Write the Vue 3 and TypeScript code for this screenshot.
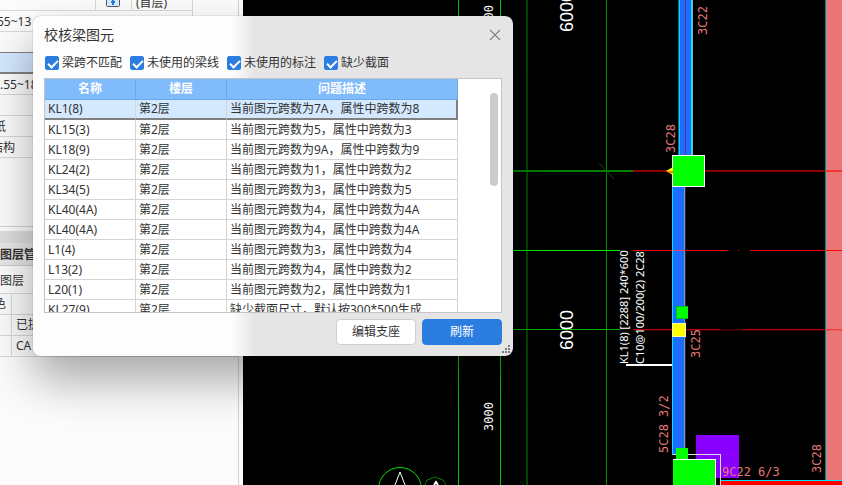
<script setup lang="ts">
import { ref } from 'vue'

interface Issue {
  name: string
  floor: string
  text: string
}
interface Filter {
  label: string
  on: boolean
}

const filters = ref<Filter[]>([
  { label: '梁跨不匹配', on: true },
  { label: '未使用的梁线', on: true },
  { label: '未使用的标注', on: true },
  { label: '缺少截面', on: true },
])

const span = (now: string, prop: string) => `当前图元跨数为${now}，属性中跨数为${prop}`
const issues: Issue[] = [
  { name: 'KL1(8)', floor: '第2层', text: span('7A', '8') },
  { name: 'KL15(3)', floor: '第2层', text: span('5', '3') },
  { name: 'KL18(9)', floor: '第2层', text: span('9A', '9') },
  { name: 'KL24(2)', floor: '第2层', text: span('1', '2') },
  { name: 'KL34(5)', floor: '第2层', text: span('3', '5') },
  { name: 'KL40(4A)', floor: '第2层', text: span('4', '4A') },
  { name: 'KL40(4A)', floor: '第2层', text: span('4', '4A') },
  { name: 'L1(4)', floor: '第2层', text: span('3', '4') },
  { name: 'L13(2)', floor: '第2层', text: span('4', '2') },
  { name: 'L20(1)', floor: '第2层', text: span('2', '1') },
  { name: 'KL27(9)', floor: '第2层', text: '缺少截面尺寸，默认按300*500生成' },
]
const selected = ref(0)
const open = ref(true)
</script>

<template>
  <div class="app">
    <aside class="side">
      <div class="drawings">
        <div class="row first">
          <span class="cell grow"></span>
          <span class="cell lock">
            <svg width="14" height="12" viewBox="0 0 14 12" aria-hidden="true">
              <rect x="0.5" y="-4" width="13" height="10.5" rx="1" fill="#dceafa" stroke="#4a5a78" />
              <path d="M7 5V-2M5 2h4" fill="none" stroke="#2b7de0" stroke-width="2" />
            </svg>
          </span>
          <span class="cell floor">(首层)</span>
        </div>
        <div class="row cut">55~13</div>
        <div class="row"></div>
        <div class="row picked"></div>
        <div class="row">.55~18</div>
        <div class="row"></div>
        <div class="row cut half">纸</div>
        <div class="row cut">结构</div>
      </div>
      <div class="splitter"></div>
      <div class="heading">图层管</div>
      <div class="tab">图层</div>
      <div class="layers">
        <div class="row"><span class="cell key">色</span><span class="cell"></span></div>
        <div class="row"><span class="cell key"></span><span class="cell">已提</span></div>
        <div class="row"><span class="cell key"></span><span class="cell">CA</span></div>
      </div>
    </aside>

    <main class="canvas">
      <svg class="cad" viewBox="243 0 599 485" preserveAspectRatio="xMinYMin slice" role="img" aria-label="梁平面图">
        <g shape-rendering="crispEdges">
          <rect x="458" y="0" width="1" height="485" fill="#00c800" />
          <rect x="500" y="0" width="1" height="485" fill="#00c800" />
          <rect x="526" y="0" width="2" height="485" fill="#004600" />
          <rect x="606" y="0" width="1" height="485" fill="#008c00" />
          <rect x="513" y="170" width="120" height="2" fill="#008000" />
          <rect x="513" y="250" width="107" height="1" fill="#00f000" />
          <rect x="513" y="329" width="107" height="1" fill="#00b400" />
          <rect x="633" y="170" width="209" height="2" fill="#8c0000" />
          <path d="M633 250.500H728M738 250.500h1M750 250.500H842" stroke="#f00" />
          <rect x="633" y="329" width="209" height="1" fill="#b80000" />
          <rect x="633" y="330" width="209" height="1" fill="#380000" />
          <rect x="720" y="329" width="23" height="1" fill="#400000" />

          <rect x="679" y="0" width="14" height="156" fill="#1b6cff" />
          <rect x="678" y="0" width="1" height="156" fill="#146a7c" />
          <rect x="679" y="0" width="1" height="156" fill="#00d8ff" />
          <rect x="691" y="0" width="1" height="156" fill="#00e8ff" />
          <rect x="685" y="0" width="1" height="156" fill="#65308c" />
          <rect x="692" y="0" width="1" height="156" fill="#6fb8bc" />
          <rect x="673" y="187" width="12" height="268" fill="#1b6cff" />
          <rect x="672" y="187" width="1" height="268" fill="#00e0ff" />
          <rect x="684" y="187" width="1" height="268" fill="#48a8e8" />
          <rect x="685" y="187" width="1" height="268" fill="#5c1010" />
          <rect x="673" y="250" width="12" height="1" fill="#f44" />

          <rect x="826" y="0" width="16" height="481" fill="#eb7474" />
          <rect x="825" y="0" width="1" height="481" fill="#168080" />
          <rect x="826" y="0" width="1" height="481" fill="#8aa0a0" />
          <rect x="826" y="170" width="16" height="2" fill="#f43838" />
          <rect x="826" y="250" width="16" height="1" fill="#f00" />
          <rect x="826" y="329" width="16" height="1" fill="#f04040" />
          <rect x="826" y="330" width="16" height="1" fill="#eb6060" />

          <rect x="672" y="155" width="33" height="32" fill="#fff" />
          <rect x="673" y="156" width="31" height="30" fill="#0f0" />
          <rect x="676" y="306" width="12" height="13" fill="#00c020" />
          <rect x="677" y="307" width="11" height="11" fill="#0f0" />
          <rect x="672" y="323" width="14" height="14" fill="#fffab0" />
          <rect x="673" y="324" width="12" height="12" fill="#ff0" />
          <rect x="626" y="364" width="46" height="2" fill="#fff" />

          <rect x="696" y="435" width="43" height="43" fill="#8a00ff" />
          <path d="M673 454.500h47.500V485" fill="none" stroke="#e0e0e8" />
          <rect x="676" y="448" width="12" height="12" fill="#0f0" />
          <rect x="673" y="459" width="43" height="26" fill="#fff" />
          <rect x="673" y="460" width="42" height="25" fill="#0f0" />
          <rect x="721" y="480" width="121" height="1" fill="#00e8ff" />
          <rect x="721" y="481" width="121" height="4" fill="#f00" />
        </g>
        <path d="M666 171l7-4v8z" fill="#ff0" />
        <path d="M667 171h6v2h-4z" fill="#ff7a00" />
        <path d="M599 163l15 16" stroke="#005000" />
        <circle cx="400" cy="489" r="21.500" fill="none" stroke="#00e000" />
        <path d="M395 485l5-13 5 13" fill="none" stroke="#fff" />
        <path d="M425 485l2-5 8-3 8 3 3 5" fill="none" stroke="#008000" />
        <path d="M434 485l2-3 2 3" fill="none" stroke="#fff" stroke-width="2" />
        <path d="M520 481l4 4" stroke="#005000" />

        <g class="dim">
          <text transform="translate(493 34) rotate(-90)">3000</text>
          <text transform="translate(493 431) rotate(-90)">3000</text>
          <text class="wide" transform="translate(573 32) rotate(-90)">6000</text>
          <text class="wide" transform="translate(573 350) rotate(-90)">6000</text>
          <text class="note" transform="translate(628 364) rotate(-90)">KL1(8) [2288] 240*600</text>
          <text class="note" transform="translate(644 364) rotate(-90)">C10@100/200(2) 2C28</text>
        </g>
        <g class="rebar">
          <text transform="translate(707 35) rotate(-90)">3C22</text>
          <text transform="translate(675 153) rotate(-90)">3C28</text>
          <text transform="translate(700 358) rotate(-90)">3C25</text>
          <text transform="translate(668 453) rotate(-90)">5C28 3/2</text>
          <text transform="translate(821 473) rotate(-90)">3C28</text>
          <text x="722" y="476">9C22 6/3</text>
        </g>
      </svg>
    </main>

    <section v-if="open" class="dialog" role="dialog" aria-labelledby="dialog-title">
      <header class="bar">
        <h1 id="dialog-title">校核梁图元</h1>
        <button class="close" type="button" aria-label="关闭" @click="open = false">
          <svg width="12" height="12" viewBox="0 0 12 12"><path d="M1 1l10 10M11 1L1 11" stroke="#858585" stroke-width="1.300" /></svg>
        </button>
      </header>
      <div class="filters">
        <label v-for="f in filters" :key="f.label"><input v-model="f.on" type="checkbox" />{{ f.label }}</label>
      </div>
      <div class="list">
        <table>
          <thead>
            <tr><th class="c-name">名称</th><th class="c-floor">楼层</th><th>问题描述</th></tr>
          </thead>
          <tbody>
            <tr v-for="(it, i) in issues" :key="i" :class="{ on: i === selected }" @click="selected = i">
              <td>{{ it.name }}</td><td>{{ it.floor }}</td><td>{{ it.text }}</td>
            </tr>
          </tbody>
        </table>
        <div class="thumb"></div>
      </div>
      <footer class="actions">
        <button class="btn" type="button">编辑支座</button>
        <button class="btn primary" type="button">刷新</button>
      </footer>
      <svg class="grip" width="9" height="9" viewBox="0 0 9 9" aria-hidden="true">
        <path d="M6 0h2v2H6zM3 3h2v2H3zM6 3h2v2H6zM0 6h2v2H0zM3 6h2v2H3zM6 6h2v2H6z" fill="#777b84" />
      </svg>
    </section>
  </div>
</template>

<style>
body { overflow: hidden; }
</style>

<style scoped>
* { box-sizing: border-box; }
.app {
  position: relative;
  display: flex;
  height: 100vh;
  overflow: hidden;
  background: #fcfcfc;
  color: #333;
  font: 12px/20px "Noto Sans", "Noto Sans CJK SC", sans-serif;
}
.side {
  flex: none;
  width: 239px;
  margin-right: 4px;
  border-right: 1px solid #d4d4d4;
  overflow: hidden;
  white-space: nowrap;
}
.row {
  display: flex;
  height: 21px;
  border-bottom: 1px solid #d8d8d8;
}
.cell { flex: 1; padding-left: 4px; }
.drawings {
  height: 227px;
  border-bottom: 1px solid #d4d4d4;
  line-height: 22px;
}
.drawings .row { width: 193px; border-right: 1px solid #d8d8d8; }
.drawings .first { height: 11px; }
.first .cell { border-right: 1px solid #d8d8d8; }
.first .lock { flex: none; width: 36px; padding-left: 10px; line-height: 8px; }
.first .floor { flex: none; width: 60px; border: 0; line-height: 6px; }
.drawings .picked { background: #d4e8fe; border-bottom: 2px solid #808080; box-shadow: 0 -1px #808080; }
.cut { text-indent: -3px; }
.cut.half { text-indent: -6px; }
.cut:last-child { text-indent: -9px; }
.splitter { height: 16px; border-top: 4px solid #fcfcfc; background: #dedede; }
.heading {
  height: 23px;
  border-bottom: 1px solid #ccc;
  background: #e8e8e8;
  font-weight: 700;
  line-height: 24px;
}
.tab { height: 28px; border-bottom: 1px solid #d8d8d8; line-height: 30px; }
.layers .key { flex: none; width: 12px; padding: 0; border-right: 1px solid #d8d8d8; text-indent: -6px; }
.canvas { flex: 1; min-width: 0; background: #000; }
.cad { display: block; width: 100%; height: 100%; }
.cad text { font-family: "DejaVu Sans Mono", monospace; font-size: 12px; white-space: pre; }
.dim text { fill: #fff; }
.rebar text { fill: #e87878; }
.dim .wide { font-family: "Liberation Sans", sans-serif; font-size: 18px; }
.dim .note { font-family: "Noto Sans", sans-serif; font-size: 11px; }

.dialog {
  position: absolute;
  left: 33px;
  top: 16px;
  width: 480px;
  padding: 0 11px 11px;
  border-radius: 8px;
  background: linear-gradient(90deg, #fdfdfd 198px, #e5e5e5 222px);
  box-shadow: 0 0 1px rgba(0, 0, 0, 0.6), 0 24px 48px rgba(0, 0, 0, 0.34);
}
.bar { display: flex; justify-content: space-between; align-items: center; height: 38px; }
h1 { margin: 0; font-size: 14px; font-weight: 400; }
button { font: inherit; color: inherit; cursor: pointer; }
.close { display: flex; padding: 0 1px 0 0; border: 0; background: none; }
.filters { display: flex; gap: 8px; height: 24px; padding-left: 1px; }
.filters label { display: flex; align-items: center; gap: 3px; height: 18px; line-height: 22px; white-space: nowrap; }
.filters input {
  appearance: none;
  position: relative;
  width: 14px;
  height: 14px;
  margin: 0;
  border: 1px solid #2b7de0;
  border-radius: 2px;
  background: #fff;
}
.filters input:checked { background: #2b7de0; }
.filters input:checked::after {
  content: "";
  position: absolute;
  left: 4px;
  top: 1px;
  width: 4px;
  height: 8px;
  border: solid #fff;
  border-width: 0 2px 2px 0;
  transform: rotate(45deg);
}
.list {
  display: flex;
  justify-content: space-between;
  height: 235px;
  border: 1px solid #c4c4c4;
  background: #fff;
  overflow: hidden;
}
table { align-self: flex-start; width: 413px; border-collapse: separate; border-spacing: 0; table-layout: fixed; }
.c-name, .c-floor { width: 91px; }
th, td { height: 20px; padding: 0; line-height: 18px; white-space: nowrap; border-right: 1px solid #d4d4d4; border-bottom: 1px solid #d4d4d4; }
th { height: 21px; border-color: #68a8ec; background: #80bbfc; color: #fff; font-weight: 700; line-height: 20px; }
td { padding-left: 3px; text-align: left; }
.on td { background: #d4e8fe; border-bottom: 2px solid #808080; line-height: 18px; }
.on td:last-child { border-right: 2px solid #808080; }
.thumb { width: 8px; height: 93px; margin: 14px 3px 0 0; border-radius: 4px; background: #cbcbcb; }
.actions { display: flex; justify-content: flex-end; gap: 6px; margin-top: 6px; }
.btn { width: 80px; height: 26px; padding: 0; border: 1px solid #cfcfcf; border-radius: 4px; background: #fff; }
.primary { border-color: #2b7de0; background: #2b7de0; color: #fff; }
.grip { position: absolute; right: 2px; bottom: 2px; }
</style>
